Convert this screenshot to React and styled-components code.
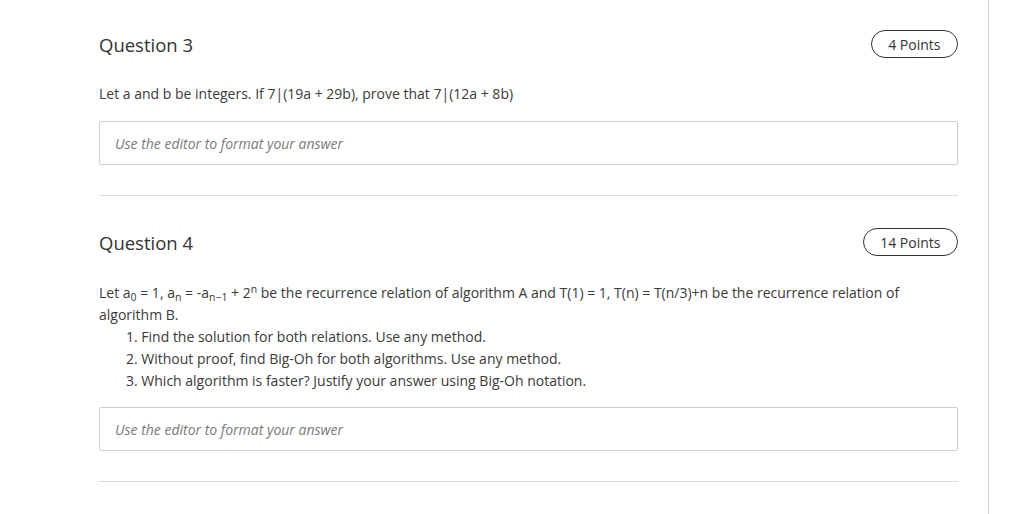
import React from "react";
import styled, { createGlobalStyle } from "styled-components";

const GlobalStyle = createGlobalStyle`
  html, body {
    margin: 0;
    padding: 0;
    background: #fff;
    overflow: hidden;
  }
  body {
    font-family: "Open Sans", "Noto Sans", sans-serif;
    color: #333;
  }
`;

const Page = styled.div`
  display: flex;
  height: 514px;
`;

const Main = styled.main`
  width: 859px;
  padding: 0 30px 0 99px;
  border-right: 1px solid #cfcfcf;
  overflow: hidden;
`;

const Section = styled.section`
  padding: ${(p) => (p.$first ? "30px" : "32px")} 0 30px;
  border-bottom: 1px solid #dcdcdc;
`;

const Header = styled.div`
  display: flex;
  align-items: center;
  justify-content: space-between;
  height: 28px;
`;

const Title = styled.h2`
  margin: 0;
  font-size: 18.5px;
  font-weight: 400;
  color: #333;
`;

const Badge = styled.span`
  display: inline-flex;
  align-items: center;
  height: 26px;
  padding: 0 16.5px;
  border: 1px solid #333;
  border-radius: 14px;
  font-size: 14px;
  color: #333;
`;

const Body = styled.div`
  margin-top: ${(p) => p.$top || 25}px;
  font-size: 14px;
  line-height: 22px;
  color: #3a3a3a;
`;

const Para = styled.p`
  margin: 0;
`;

const Steps = styled.ol`
  margin: 0;
  padding-left: 27px;
  list-style-position: inside;
`;

const Sub = styled.sub`
  font-size: 10.5px;
  vertical-align: -3px;
  line-height: 0;
`;

const Sup = styled.sup`
  font-size: 10.5px;
  vertical-align: 5px;
  line-height: 0;
`;

const Editor = styled.div`
  margin-top: ${(p) => p.$top || 16}px;
  height: 42px;
  display: flex;
  align-items: center;
  padding: 0 15px;
  border: 1px solid #cfcfcf;
  border-radius: 2px;
  font-size: 14px;
  font-style: italic;
  color: #7a7a7a;
`;

function Question({ number, points, first, children, editorTop }) {
  return (
    <Section $first={first}>
      <Header>
        <Title>Question {number}</Title>
        <Badge>{points} Points</Badge>
      </Header>
      {children}
      <Editor $top={editorTop}>Use the editor to format your answer</Editor>
    </Section>
  );
}

export default function App() {
  return (
    <Page>
      <GlobalStyle />
      <Main>
        <Question number={3} points={4} first>
          <Body>
            <Para>Let a and b be integers. If 7|(19a + 29b), prove that 7|(12a + 8b)</Para>
          </Body>
        </Question>
        <Question number={4} points={14} editorTop={15}>
          <Body $top={26}>
            <Para>
              Let a<Sub>0</Sub> = 1, a<Sub>n</Sub> = -a<Sub>n−1</Sub> + 2<Sup>n</Sup> be the
              recurrence relation of algorithm A and T(1) = 1, T(n) = T(n/3)+n be the
              recurrence relation of algorithm B.
            </Para>
            <Steps>
              <li>Find the solution for both relations. Use any method.</li>
              <li>Without proof, find Big-Oh for both algorithms. Use any method.</li>
              <li>Which algorithm is faster? Justify your answer using Big-Oh notation.</li>
            </Steps>
          </Body>
        </Question>
        <Question number={5} points={4}>
          <Body>
            <Para>&nbsp;</Para>
          </Body>
        </Question>
      </Main>
    </Page>
  );
}
